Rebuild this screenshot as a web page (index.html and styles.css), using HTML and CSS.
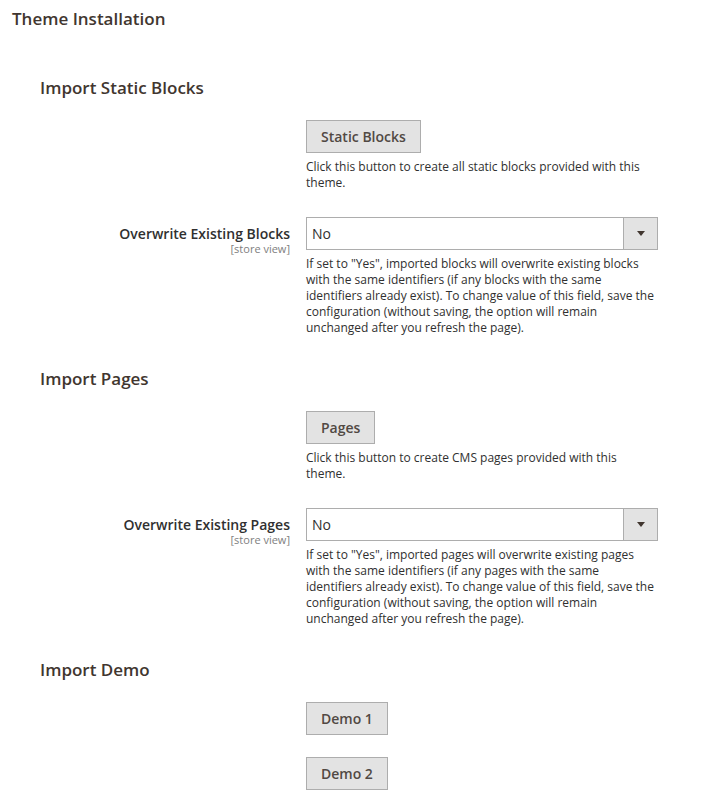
FILE: index.html
```html
<!DOCTYPE html>
<html lang="en">
<head>
    <meta charset="UTF-8">
    <meta name="viewport" content="width=device-width, initial-scale=1.0">
    <title>Theme Installation</title>
    <link rel="stylesheet" href="styles.css">
</head>
<body>
    <h1 class="section-title">Theme Installation</h1>

    <div class="fieldset">
        <!-- Static blocks -->
        <h2 class="legend">Import Static Blocks</h2>

        <div class="field">
            <div class="field-label"></div>
            <div class="field-control">
                <button class="action-button" type="button">Static Blocks</button>
                <p class="note">Click this button to create all static blocks provided with this theme.</p>
            </div>
        </div>

        <div class="field">
            <div class="field-label">
                <label>Overwrite Existing Blocks</label>
                <span class="scope">[store view]</span>
            </div>
            <div class="field-control">
                <div class="select-wrap">
                    <select class="select">
                        <option>No</option>
                        <option>Yes</option>
                    </select>
                </div>
                <p class="note">If set to "Yes", imported blocks will overwrite existing blocks with the same identifiers (if any blocks with the same identifiers already exist). To change value of this field, save the configuration (without saving, the option will remain unchanged after you refresh the page).</p>
            </div>
        </div>

        <!-- Pages -->
        <h2 class="legend">Import Pages</h2>

        <div class="field">
            <div class="field-label"></div>
            <div class="field-control">
                <button class="action-button" type="button">Pages</button>
                <p class="note">Click this button to create CMS pages provided with this theme.</p>
            </div>
        </div>

        <div class="field">
            <div class="field-label">
                <label>Overwrite Existing Pages</label>
                <span class="scope">[store view]</span>
            </div>
            <div class="field-control">
                <div class="select-wrap">
                    <select class="select">
                        <option>No</option>
                        <option>Yes</option>
                    </select>
                </div>
                <p class="note">If set to "Yes", imported pages will overwrite existing pages with the same identifiers (if any pages with the same identifiers already exist). To change value of this field, save the configuration (without saving, the option will remain unchanged after you refresh the page).</p>
            </div>
        </div>

        <!-- Demo -->
        <h2 class="legend">Import Demo</h2>

        <div class="field field-compact">
            <div class="field-label"></div>
            <div class="field-control">
                <button class="action-button" type="button">Demo 1</button>
            </div>
        </div>

        <div class="field field-compact">
            <div class="field-label"></div>
            <div class="field-control">
                <button class="action-button" type="button">Demo 2</button>
            </div>
        </div>
    </div>
</body>
</html>
```

FILE: styles.css
```css
* {
    margin: 0;
    padding: 0;
    box-sizing: border-box;
}

body {
    font-family: "Open Sans", "Liberation Sans", sans-serif;
    color: #303030;
    background: #fff;
    font-size: 14px;
}

.section-title {
    font-size: 17px;
    font-weight: 600;
    line-height: 21px;
    color: #41362f;
    padding: 8px 12px 0;
}

.fieldset {
    padding: 42px 0 0 40px;
}

.legend {
    font-size: 17px;
    font-weight: 600;
    line-height: 21px;
    color: #41362f;
    padding-top: 6px;
    margin-bottom: 22px;
}

.field {
    display: grid;
    grid-template-columns: 250px 352px;
    column-gap: 16px;
    margin-bottom: 26px;
}

.field-compact {
    margin-bottom: 22px;
}

.field-label {
    text-align: right;
    padding-top: 8px;
}

.field-label label {
    display: block;
    font-size: 14px;
    font-weight: 600;
    line-height: 17px;
    color: #303030;
}

.scope {
    display: block;
    font-size: 11px;
    line-height: 13px;
    color: #808080;
}

.action-button {
    font-family: inherit;
    font-size: 14px;
    font-weight: 600;
    line-height: 19px;
    color: #514943;
    background: #e3e3e3;
    border: 1px solid #adadad;
    border-radius: 0;
    padding: 6px 14px;
    cursor: pointer;
}

.action-button:hover {
    background: #dbdbdb;
}

.note {
    font-size: 12px;
    line-height: 16px;
    color: #303030;
    margin-top: 6px;
}

.select-wrap {
    position: relative;
}

.select {
    display: block;
    width: 100%;
    height: 33px;
    font-family: inherit;
    font-size: 14px;
    color: #303030;
    background: #fff;
    border: 1px solid #adadad;
    border-radius: 0;
    padding: 0 40px 0 5px;
    appearance: none;
    -webkit-appearance: none;
}

/* arrow box on the right of the select */
.select-wrap::after {
    content: "";
    position: absolute;
    top: 1px;
    right: 1px;
    bottom: 1px;
    width: 33px;
    border-left: 1px solid #adadad;
    background: #e3e3e3;
    pointer-events: none;
}

.select-wrap::before {
    content: "";
    position: absolute;
    z-index: 1;
    top: 14px;
    right: 13px;
    border-left: 4px solid transparent;
    border-right: 4px solid transparent;
    border-top: 5px solid #41362f;
    pointer-events: none;
}
```
